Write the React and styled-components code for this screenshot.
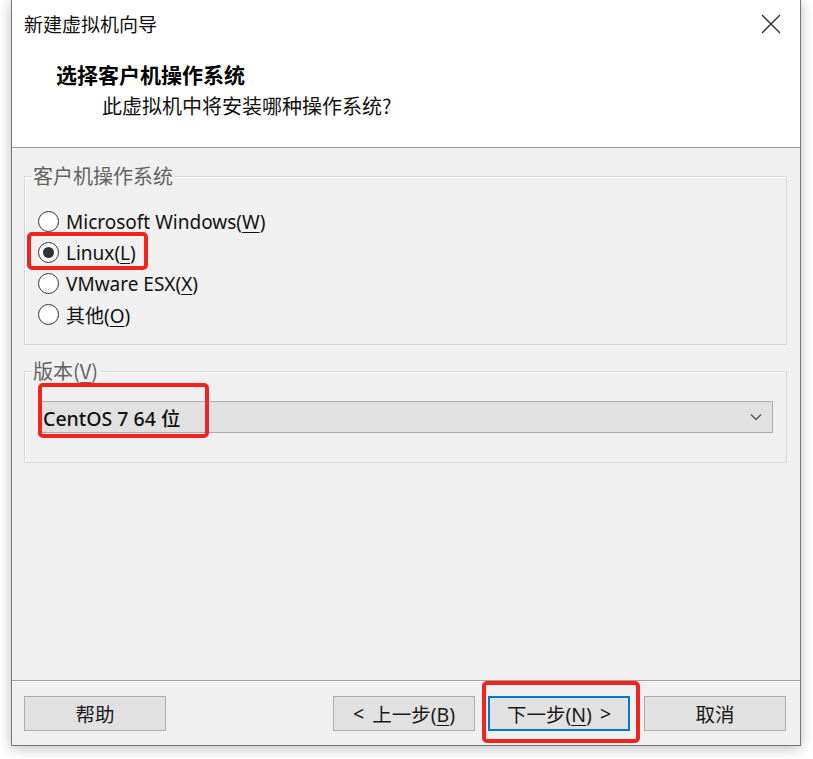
import React from "react";
import styled, { createGlobalStyle } from "styled-components";

const GlobalStyle = createGlobalStyle`
  html, body {
    margin: 0;
    padding: 0;
    background: #ffffff;
  }
  body {
    font-family: "Noto Sans", "Noto Sans CJK SC", sans-serif;
    color: #1a1a1a;
  }
`;

const Page = styled.div`
  width: 813px;
  height: 759px;
  padding-left: 11px;
  box-sizing: border-box;
  overflow: hidden;
`;

const Window = styled.div`
  width: 790px;
  height: 746px;
  box-sizing: border-box;
  border: 1px solid #767676;
  border-top: none;
  display: flex;
  flex-direction: column;
  background: #f0f0f0;
  box-shadow: 0 2px 12px rgba(0, 0, 0, 0.28);
`;

const TitleBar = styled.div`
  height: 48px;
  display: flex;
  align-items: center;
  justify-content: space-between;
  padding: 0 17px 0 12px;
  background: #ffffff;
  font-family: "Noto Sans CJK SC", sans-serif;
  font-size: 19px;
  line-height: 24px;
  color: #111;
`;

const CloseButton = styled.button`
  width: 24px;
  height: 24px;
  padding: 0;
  border: none;
  background: transparent;
  display: flex;
  align-items: center;
  justify-content: center;
`;

const Header = styled.div`
  background: #ffffff;
  padding: 13px 0 27px 44px;
  display: flex;
  flex-direction: column;
  gap: 3px;
  border-bottom: 1px solid #a0a0a0;
`;

const Heading = styled.div`
  font-family: "Noto Sans CJK SC", sans-serif;
  font-weight: 700;
  font-size: 21px;
  line-height: 27px;
  color: #000;
`;

const Subtitle = styled.div`
  font-family: "Noto Sans CJK SC", sans-serif;
  font-size: 20px;
  line-height: 29px;
  padding-left: 46px;
  color: #111;
`;

const Body = styled.div`
  flex: 1;
  padding: 16px 13px 0 12px;
  display: flex;
  flex-direction: column;
  gap: 14px;
`;

const Group = styled.fieldset`
  margin: 0;
  padding: ${(p) => p.$pad};
  border: 1px solid #d9d9d9;
  box-shadow: inset 1px 1px 0 #ffffff;
  position: relative;
  min-width: 0;
`;

const Legend = styled.legend`
  margin-left: ${(p) => p.$offset}px;
  padding: 0 2px 0 1px;
  font-family: "Noto Sans CJK SC", sans-serif;
  font-size: 20px;
  line-height: 24px;
  color: #626262;
`;

const Mnemonic = styled.span`
  text-decoration: underline;
  text-underline-offset: 3px;
  text-decoration-thickness: 1px;
`;

const RadioRow = styled.label`
  position: relative;
  display: flex;
  align-items: center;
  align-self: flex-start;
  gap: 7px;
  height: 31px;
  font-size: 19px;
  color: #111;
`;

const RadioCircle = styled.span`
  width: 21px;
  height: 21px;
  box-sizing: border-box;
  border-radius: 50%;
  border: 1.5px solid #333;
  background: #fff;
  display: flex;
  align-items: center;
  justify-content: center;
  &::after {
    content: "";
    width: 11px;
    height: 11px;
    border-radius: 50%;
    background: ${(p) => (p.$checked ? "#333" : "transparent")};
  }
`;

const RadioList = styled.div`
  display: flex;
  flex-direction: column;
`;

const Annotation = styled.span`
  position: absolute;
  left: ${(p) => p.$l}px;
  top: ${(p) => p.$t}px;
  width: ${(p) => p.$w}px;
  height: ${(p) => p.$h}px;
  box-sizing: border-box;
  border: 4px solid #f2231c;
  border-radius: 5px;
  pointer-events: none;
`;

const Select = styled.div`
  position: relative;
  height: 32px;
  box-sizing: border-box;
  border: 1px solid #adadad;
  background: #e1e1e1;
  display: flex;
  align-items: center;
  justify-content: space-between;
  padding: 0 10px 0 2px;
  font-size: 19.5px;
  font-weight: 500;
  color: #111;
`;

const Footer = styled.div`
  border-top: 1px solid #a0a0a0;
  box-shadow: inset 0 1px 0 #ffffff;
  padding: 15px 14px 14px 12px;
  display: flex;
  align-items: center;
`;

const Button = styled.button`
  position: relative;
  width: 142px;
  height: 35px;
  box-sizing: border-box;
  margin-left: ${(p) => p.$gap || 0}px;
  border: ${(p) => (p.$primary ? "2px solid #0078d7" : "1px solid #adadad")};
  background: #e1e1e1;
  font-family: "Noto Sans", "Noto Sans CJK SC", sans-serif;
  font-size: 19.5px;
  color: #1a1a1a;
  padding: 0;
  display: flex;
  align-items: center;
  justify-content: center;
  gap: 8px;
`;

const Spacer = styled.div`
  flex: 1;
`;

const Chevron = () => (
  <svg width="12" height="8" viewBox="0 0 12 8">
    <path d="M1 1.5 L6 6.5 L11 1.5" fill="none" stroke="#555" strokeWidth="1.3" />
  </svg>
);

const CloseIcon = () => (
  <svg width="20" height="20" viewBox="0 0 20 20">
    <path d="M1 1 L19 19 M19 1 L1 19" stroke="#333" strokeWidth="1.4" />
  </svg>
);

const options = [
  { label: "Microsoft Windows", key: "W" },
  { label: "Linux", key: "L", checked: true },
  { label: "VMware ESX", key: "X" },
  { label: "其他", key: "O" },
];

export default function App() {
  return (
    <Page>
      <GlobalStyle />
      <Window>
        <TitleBar>
          <span>新建虚拟机向导</span>
          <CloseButton>
            <CloseIcon />
          </CloseButton>
        </TitleBar>
        <Header>
          <Heading>选择客户机操作系统</Heading>
          <Subtitle>此虚拟机中将安装哪种操作系统?</Subtitle>
        </Header>
        <Body>
          <Group $pad="18px 13px 14px 13px">
            <Legend $offset={-6}>客户机操作系统</Legend>
            <RadioList>
              {options.map((o) => (
                <RadioRow key={o.key}>
                  <RadioCircle $checked={o.checked} />
                  <span>
                    {o.label}(<Mnemonic>{o.key}</Mnemonic>)
                  </span>
                  {o.checked && <Annotation $l={-11} $t={-5} $w={121} $h={38} />}
                </RadioRow>
              ))}
            </RadioList>
          </Group>
          <Group $pad="18px 13px 29px 15px">
            <Legend $offset={-8}>
              版本(<Mnemonic>V</Mnemonic>)
            </Legend>
            <Select>
              <span>CentOS 7 64 位</span>
              <Chevron />
              <Annotation $l={-3} $t={-19} $w={171} $h={55} />
            </Select>
          </Group>
        </Body>
        <Footer>
          <Button>帮助</Button>
          <Spacer />
          <Button>
            <span>&lt;</span>
            <span>
              上一步(<Mnemonic>B</Mnemonic>)
            </span>
          </Button>
          <Button $primary $gap={13}>
            <span>
              下一步(<Mnemonic>N</Mnemonic>)
            </span>
            <span>&gt;</span>
            <Annotation $l={-8} $t={-17} $w={158} $h={62} />
          </Button>
          <Button $gap={14}>取消</Button>
        </Footer>
      </Window>
    </Page>
  );
}
